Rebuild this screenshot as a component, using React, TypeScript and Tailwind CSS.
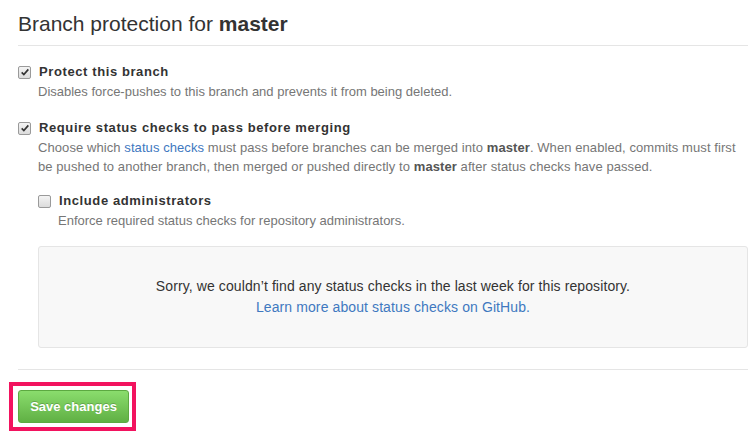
import type { ReactNode } from "react";

function Checkbox({ checked }: { checked?: boolean }) {
  return (
    <span className="relative mr-[8px] inline-flex h-[13px] w-[13px] shrink-0 items-center justify-center rounded-[2px] border border-[#9a9a9a] bg-gradient-to-b from-[#f4f4f4] to-[#dcdcdc]">
      {checked && (
        <svg viewBox="0 0 12 12" className="h-[10px] w-[10px]">
          <path d="M2 6.5 L4.6 9 L10 2.8" fill="none" stroke="#333" strokeWidth="2" />
        </svg>
      )}
    </span>
  );
}

function Option({
  checked,
  title,
  children,
  noteClass = "",
}: {
  checked?: boolean;
  title: string;
  children: ReactNode;
  noteClass?: string;
}) {
  return (
    <div>
      <label className="flex h-5 items-center text-[13px] font-bold tracking-[0.6px] text-[#333]">
        <Checkbox checked={checked} />
        {title}
      </label>
      <p className={`pl-[20px] text-[13px] leading-[19px] text-[#767676] ${noteClass}`}>{children}</p>
    </div>
  );
}

export default function App() {
  return (
    <div className="h-[436px] w-[755px] overflow-hidden bg-white font-['Liberation_Sans',Arial,sans-serif] text-[#333]">
      <div className="ml-[18px] w-[730px]">
        <h2 className="border-b border-[#e5e5e5] pt-[10px] pb-[7px] text-[21px] leading-[28px] font-normal">
          Branch protection for <strong className="font-bold">master</strong>
        </h2>

        <div className="mt-[16px]">
          <Option checked title="Protect this branch">
            Disables force-pushes to this branch and prevents it from being deleted.
          </Option>
        </div>

        <div className="mt-[17px]">
          <Option checked title="Require status checks to pass before merging" noteClass="pr-[6px] tracking-[0.08px]">
            Choose which <a className="text-[#4078c0]">status checks</a> must pass before branches can be merged into{" "}
            <strong className="text-[#555]">master</strong>. When enabled, commits must first be pushed to another branch,
            then merged or pushed directly to <strong className="text-[#555]">master</strong> after status checks have
            passed.
          </Option>

          <div className="mt-[15px] pl-[20px]">
            <Option title="Include administrators">
              Enforce required status checks for repository administrators.
            </Option>

            <div className="mt-[16px] rounded-[3px] border border-[#e5e5e5] bg-[#f8f8f8] py-[29px] text-center text-[14px] leading-[21px] tracking-[0.1px]">
              <p>Sorry, we couldn’t find any status checks in the last week for this repository.</p>
              <a className="text-[#4078c0]">Learn more about status checks on GitHub.</a>
            </div>
          </div>
        </div>

        <div className="mt-[21px] border-t border-[#e5e5e5]" />

        <div className="-ml-[9px] mt-[12px] inline-flex border-4 border-[#f2135f] py-[4px] pr-[3px] pl-[5px]">
          <button className="h-[33px] w-[111px] rounded-[3px] border border-[#5ca941] bg-gradient-to-b from-[#8add6d] to-[#60b044] text-[13px] font-bold text-white [text-shadow:0_-1px_0_rgba(0,0,0,0.2)]">
            Save changes
          </button>
        </div>
      </div>
    </div>
  );
}
